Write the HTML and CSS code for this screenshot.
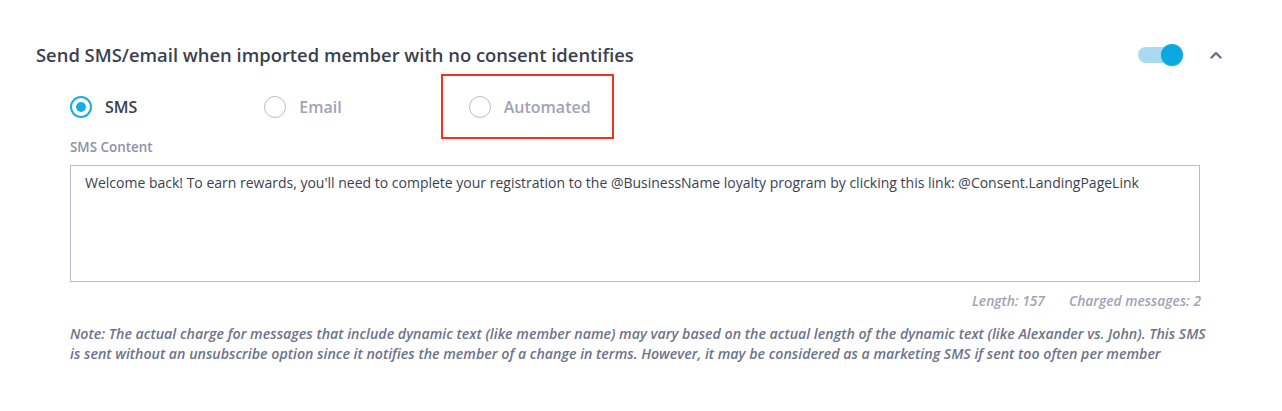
FILE: index.html
```html
<!DOCTYPE html>
<html lang="en">
<head>
<meta charset="utf-8">
<title>Consent SMS</title>
<link rel="stylesheet" href="styles.css">
</head>
<body>
<div class="section">
  <div class="header">
    <h2 class="title">Send SMS/email when imported member with no consent identifies</h2>
    <div class="controls">
      <span class="toggle"><span class="track"></span><span class="knob"></span></span>
      <svg class="chevron" width="16" height="16" viewBox="0 0 16 16"><path d="M3.5 10.5 L8 6 L12.5 10.5" fill="none" stroke="#6c7088" stroke-width="2.4" stroke-linecap="round" stroke-linejoin="round"/></svg>
    </div>
  </div>
  <div class="body">
    <div class="radios">
      <label class="radio checked"><span class="circle"><span class="dot"></span></span><span class="rlabel">SMS</span></label>
      <label class="radio"><span class="circle"></span><span class="rlabel">Email</span></label>
      <label class="radio"><span class="circle"></span><span class="rlabel">Automated</span></label>
      <span class="highlight"></span>
    </div>
    <div class="field-label">SMS Content</div>
    <textarea class="content" readonly>Welcome back! To earn rewards, you'll need to complete your registration to the @BusinessName loyalty program by clicking this link: @Consent.LandingPageLink</textarea>
    <div class="counts"><span>Length: 157</span><span>Charged messages: 2</span></div>
    <p class="note">Note: The actual charge for messages that include dynamic text (like member name) may vary based on the actual length of the dynamic text (like Alexander vs. John). This SMS is sent without an unsubscribe option since it notifies the member of a change in terms. However, it may be considered as a marketing SMS if sent too often per member</p>
  </div>
</div>
</body>
</html>
```

FILE: styles.css
```css
* { box-sizing: border-box; }
html, body { margin: 0; padding: 0; background: #ffffff; }
body { font-family: "Open Sans", "Noto Sans", sans-serif; color: #3b3f4e; }

.section { padding: 43px 58px 0 36px; }

.header { display: flex; align-items: center; justify-content: space-between; height: 24px; }
.title { margin: 0; font-size: 18.4px; font-weight: 600; color: #3b3f4e; line-height: 24px; }
.controls { display: flex; align-items: center; gap: 24px; }
.toggle { position: relative; width: 46px; height: 24px; display: block; }
.track { position: absolute; left: 0; top: 4px; width: 38px; height: 16px; border-radius: 8px; background: #a9daf0; }
.knob { position: absolute; right: 1px; top: 1px; width: 22px; height: 22px; border-radius: 50%; background: #0aa9e1; box-shadow: 0 1px 2px rgba(0,0,0,0.12); }
.chevron { display: block; }

.body { padding-left: 34px; padding-right: 24px; }

.radios { position: relative; display: flex; align-items: center; gap: 127px; height: 24px; margin-top: 28px; }
.radio { display: flex; align-items: center; gap: 13px; }
.circle { width: 22px; height: 22px; border-radius: 50%; border: 1.5px solid #b9bccb; display: flex; align-items: center; justify-content: center; }
.radio.checked .circle { border: 2px solid #1aace2; }
.dot { width: 10px; height: 10px; border-radius: 50%; background: #1aace2; }
.rlabel { font-size: 16px; font-weight: 600; color: #a0a3b4; }
.radio.checked .rlabel { color: #3b3f4e; }
.highlight { position: absolute; left: 371px; top: -21px; width: 173px; height: 65px; border: 2px solid #f0321e; pointer-events: none; }

.field-label { margin-top: 20px; font-size: 13.4px; font-weight: 600; color: #8d91a5; line-height: 16px; }
.content { display: block; margin-top: 10px; width: 1130px; height: 117px; border: 1px solid #b8bccb; border-radius: 0; padding: 7px 14px; font-family: "Open Sans", "Noto Sans", sans-serif; font-size: 14px; line-height: 19px; color: #3b3f4e; resize: none; outline: none; background: #fff; }

.counts { width: 1131px; display: flex; justify-content: flex-end; gap: 24px; margin-top: 10px; font-size: 13.8px; font-style: italic; font-weight: 600; color: #a0a4b5; line-height: 18px; }

.note { width: 1141px; margin: 14px 0 0 0; font-size: 14.2px; font-style: italic; font-weight: 600; color: #6e7388; line-height: 20px; }
```
